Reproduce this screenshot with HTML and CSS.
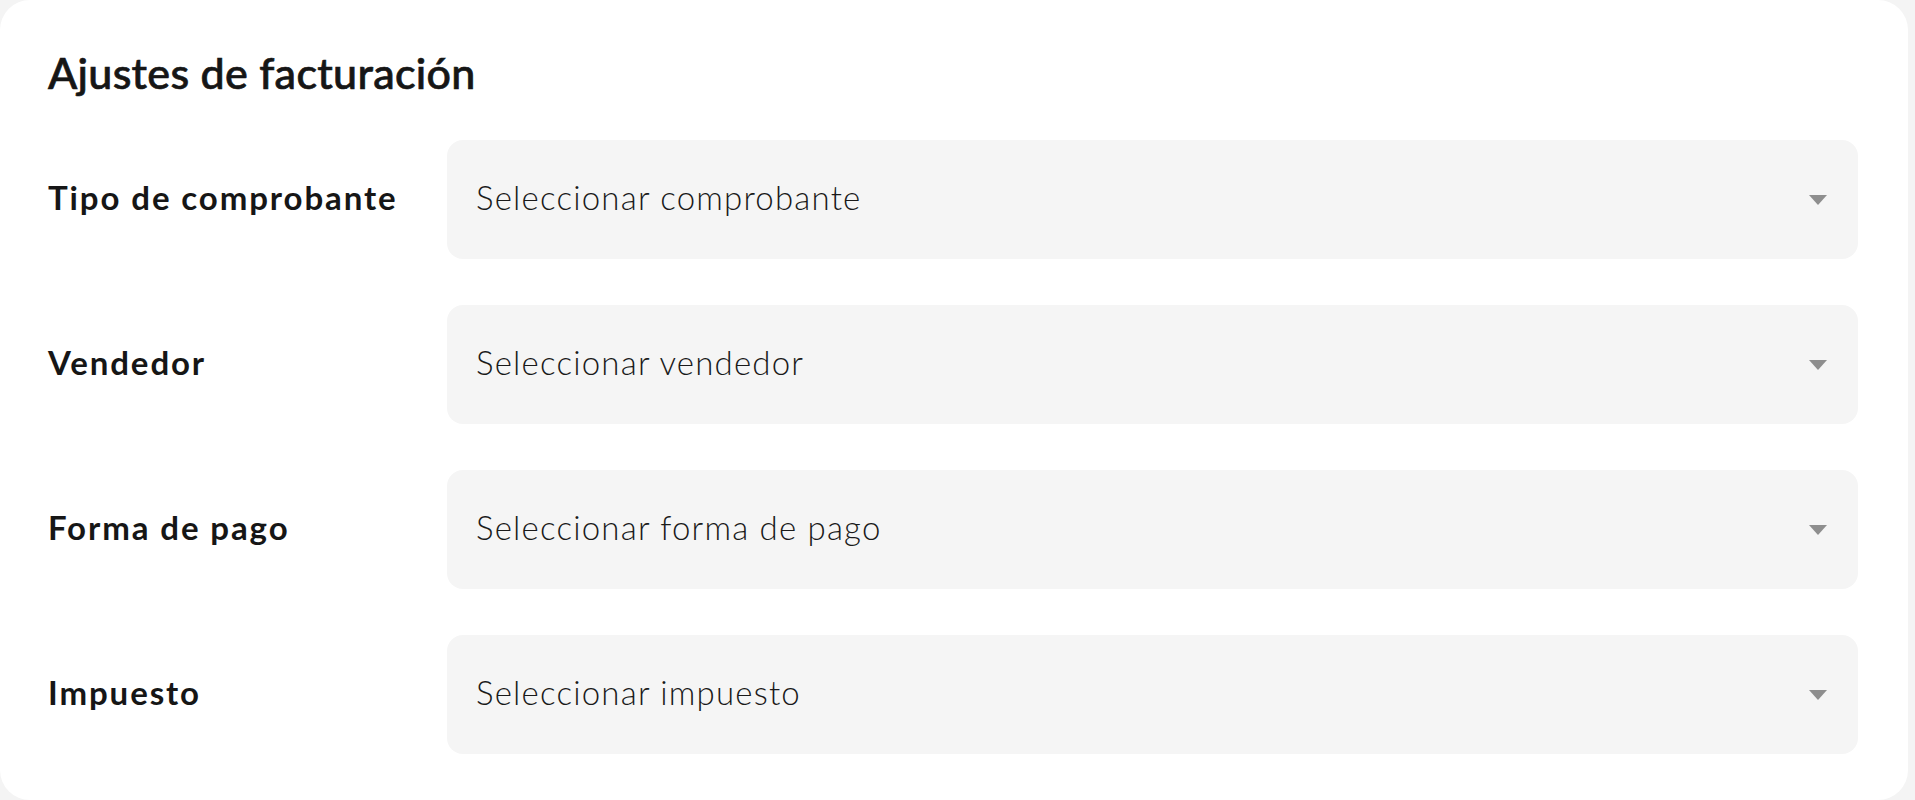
FILE: index.html
```html
<!DOCTYPE html>
<html lang="es">
<head>
<meta charset="utf-8">
<title>Ajustes de facturación</title>
<link rel="stylesheet" href="styles.css">
</head>
<body>
<section class="card">
  <h1 class="title">Ajustes de facturación</h1>
  <div class="rows">
    <div class="row">
      <span class="label">Tipo de comprobante</span>
      <div class="select"><span class="placeholder">Seleccionar comprobante</span><span class="caret"></span></div>
    </div>
    <div class="row">
      <span class="label">Vendedor</span>
      <div class="select"><span class="placeholder">Seleccionar vendedor</span><span class="caret"></span></div>
    </div>
    <div class="row">
      <span class="label">Forma de pago</span>
      <div class="select"><span class="placeholder">Seleccionar forma de pago</span><span class="caret"></span></div>
    </div>
    <div class="row">
      <span class="label">Impuesto</span>
      <div class="select"><span class="placeholder">Seleccionar impuesto</span><span class="caret"></span></div>
    </div>
  </div>
</section>
</body>
</html>
```
FILE: styles.css
```css
html, body {
  margin: 0;
  padding: 0;
}
body {
  background: #f4f4f4;
  font-family: Lato, "Open Sans", sans-serif;
  color: #161616;
  width: 1915px;
  height: 800px;
  overflow: hidden;
}
.card {
  box-sizing: border-box;
  width: 1908px;
  height: 800px;
  background: #ffffff;
  border-radius: 30px;
  padding: 51px 50px 0 48px;
  display: flex;
  flex-direction: column;
  gap: 46px;
}
.title {
  margin: 0;
  font-size: 43px;
  line-height: 43px;
  font-weight: 500;
  letter-spacing: 0.3px;
  -webkit-text-stroke: 0.7px #161616;
}
.rows {
  display: flex;
  flex-direction: column;
  gap: 46px;
}
.row {
  display: grid;
  grid-template-columns: 399px 1fr;
  align-items: center;
  height: 119px;
}
.label {
  font-size: 33px;
  line-height: 33px;
  font-weight: 700;
  letter-spacing: 1.9px;
  padding-bottom: 5px;
}
.select {
  height: 119px;
  background: #f5f5f5;
  border-radius: 16px;
  display: flex;
  align-items: center;
  justify-content: space-between;
  padding: 0 31px 0 29px;
  box-sizing: border-box;
}
.placeholder {
  font-size: 33px;
  line-height: 33px;
  font-weight: 300;
  letter-spacing: 1.2px;
  color: #1a1a1a;
  padding-bottom: 5px;
}
.caret {
  width: 0;
  height: 0;
  border-left: 9.5px solid transparent;
  border-right: 9.5px solid transparent;
  border-top: 10px solid #8e8e8e;
}
```
